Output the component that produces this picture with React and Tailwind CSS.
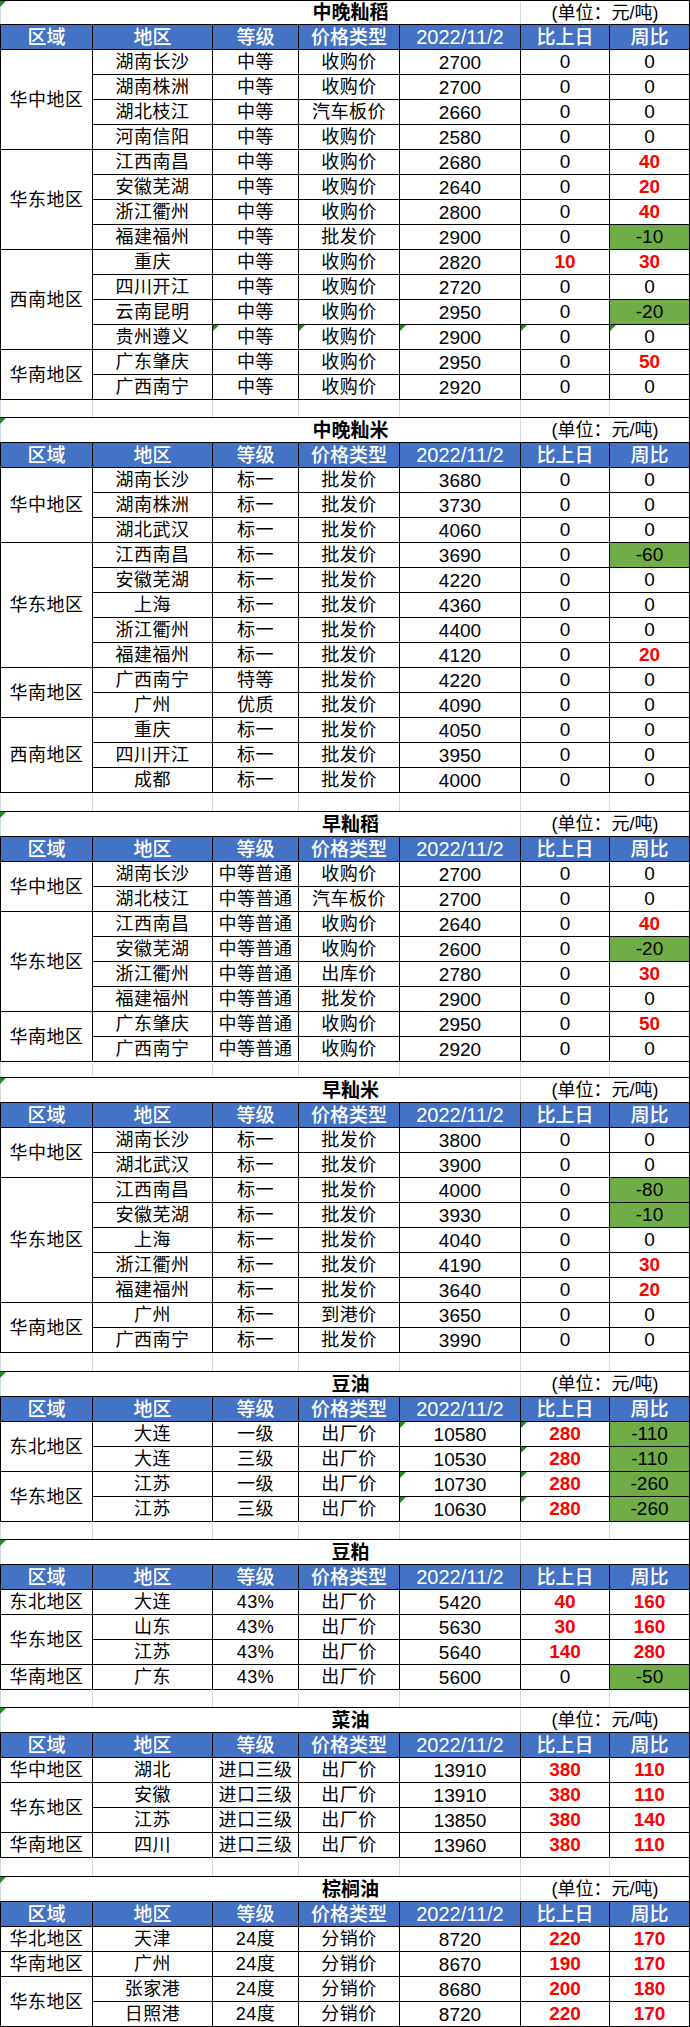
import React from 'react';

const W = ['w-[120px]', 'w-[86px]', 'w-[101px]', 'w-[121px]', 'w-[89px]', 'w-[80px]'];
const HEAD = ['地区', '等级', '价格类型', '2022/11/2', '比上日', '周比'];
const GRID = 'border-[#d0d7e5]';

// row: [地区, 等级, 价格类型, 价格, 比上日, 周比, 小三角所在列]
const tables = [
  {
    title: '中晚籼稻',
    unit: true,
    blank: 'h-[18px]',
    groups: [
      {
        region: '华中地区',
        rows: [
          ['湖南长沙', '中等', '收购价', 2700, 0, 0],
          ['湖南株洲', '中等', '收购价', 2700, 0, 0],
          ['湖北枝江', '中等', '汽车板价', 2660, 0, 0],
          ['河南信阳', '中等', '收购价', 2580, 0, 0],
        ],
      },
      {
        region: '华东地区',
        rows: [
          ['江西南昌', '中等', '收购价', 2680, 0, 40],
          ['安徽芜湖', '中等', '收购价', 2640, 0, 20],
          ['浙江衢州', '中等', '收购价', 2800, 0, 40],
          ['福建福州', '中等', '批发价', 2900, 0, -10],
        ],
      },
      {
        region: '西南地区',
        rows: [
          ['重庆', '中等', '收购价', 2820, 10, 30],
          ['四川开江', '中等', '收购价', 2720, 0, 0],
          ['云南昆明', '中等', '收购价', 2950, 0, -20],
          ['贵州遵义', '中等', '收购价', 2900, 0, 0, [1, 2, 3, 4, 5]],
        ],
      },
      {
        region: '华南地区',
        rows: [
          ['广东肇庆', '中等', '收购价', 2950, 0, 50],
          ['广西南宁', '中等', '收购价', 2920, 0, 0],
        ],
      },
    ],
  },
  {
    title: '中晚籼米',
    unit: true,
    blank: 'h-[19px]',
    groups: [
      {
        region: '华中地区',
        rows: [
          ['湖南长沙', '标一', '批发价', 3680, 0, 0],
          ['湖南株洲', '标一', '批发价', 3730, 0, 0],
          ['湖北武汉', '标一', '批发价', 4060, 0, 0],
        ],
      },
      {
        region: '华东地区',
        rows: [
          ['江西南昌', '标一', '批发价', 3690, 0, -60],
          ['安徽芜湖', '标一', '批发价', 4220, 0, 0],
          ['上海', '标一', '批发价', 4360, 0, 0],
          ['浙江衢州', '标一', '批发价', 4400, 0, 0],
          ['福建福州', '标一', '批发价', 4120, 0, 20],
        ],
      },
      {
        region: '华南地区',
        rows: [
          ['广西南宁', '特等', '批发价', 4220, 0, 0],
          ['广州', '优质', '批发价', 4090, 0, 0],
        ],
      },
      {
        region: '西南地区',
        rows: [
          ['重庆', '标一', '批发价', 4050, 0, 0],
          ['四川开江', '标一', '批发价', 3950, 0, 0],
          ['成都', '标一', '批发价', 4000, 0, 0],
        ],
      },
    ],
  },
  {
    title: '早籼稻',
    unit: true,
    blank: 'h-[16px]',
    groups: [
      {
        region: '华中地区',
        rows: [
          ['湖南长沙', '中等普通', '收购价', 2700, 0, 0],
          ['湖北枝江', '中等普通', '汽车板价', 2700, 0, 0],
        ],
      },
      {
        region: '华东地区',
        rows: [
          ['江西南昌', '中等普通', '收购价', 2640, 0, 40],
          ['安徽芜湖', '中等普通', '收购价', 2600, 0, -20],
          ['浙江衢州', '中等普通', '出库价', 2780, 0, 30],
          ['福建福州', '中等普通', '批发价', 2900, 0, 0],
        ],
      },
      {
        region: '华南地区',
        rows: [
          ['广东肇庆', '中等普通', '收购价', 2950, 0, 50],
          ['广西南宁', '中等普通', '收购价', 2920, 0, 0],
        ],
      },
    ],
  },
  {
    title: '早籼米',
    unit: true,
    blank: 'h-[19px]',
    groups: [
      {
        region: '华中地区',
        rows: [
          ['湖南长沙', '标一', '批发价', 3800, 0, 0],
          ['湖北武汉', '标一', '批发价', 3900, 0, 0],
        ],
      },
      {
        region: '华东地区',
        rows: [
          ['江西南昌', '标一', '批发价', 4000, 0, -80],
          ['安徽芜湖', '标一', '批发价', 3930, 0, -10],
          ['上海', '标一', '批发价', 4040, 0, 0],
          ['浙江衢州', '标一', '批发价', 4190, 0, 30],
          ['福建福州', '标一', '批发价', 3640, 0, 20],
        ],
      },
      {
        region: '华南地区',
        rows: [
          ['广州', '标一', '到港价', 3650, 0, 0],
          ['广西南宁', '标一', '批发价', 3990, 0, 0],
        ],
      },
    ],
  },
  {
    title: '豆油',
    unit: true,
    blank: 'h-[18px]',
    groups: [
      {
        region: '东北地区',
        rows: [
          ['大连', '一级', '出厂价', 10580, 280, -110, [3, 4]],
          ['大连', '三级', '出厂价', 10530, 280, -110, [4]],
        ],
      },
      {
        region: '华东地区',
        rows: [
          ['江苏', '一级', '出厂价', 10730, 280, -260, [3, 4]],
          ['江苏', '三级', '出厂价', 10630, 280, -260, [3, 4]],
        ],
      },
    ],
  },
  {
    title: '豆粕',
    unit: false,
    blank: 'h-[18px]',
    groups: [
      { region: '东北地区', rows: [['大连', '43%', '出厂价', 5420, 40, 160]] },
      {
        region: '华东地区',
        rows: [
          ['山东', '43%', '出厂价', 5630, 30, 160],
          ['江苏', '43%', '出厂价', 5640, 140, 280],
        ],
      },
      { region: '华南地区', rows: [['广东', '43%', '出厂价', 5600, 0, -50]] },
    ],
  },
  {
    title: '菜油',
    unit: true,
    blank: 'h-[19px]',
    groups: [
      { region: '华中地区', rows: [['湖北', '进口三级', '出厂价', 13910, 380, 110]] },
      {
        region: '华东地区',
        rows: [
          ['安徽', '进口三级', '出厂价', 13910, 380, 110],
          ['江苏', '进口三级', '出厂价', 13850, 380, 140],
        ],
      },
      { region: '华南地区', rows: [['四川', '进口三级', '出厂价', 13960, 380, 110]] },
    ],
  },
  {
    title: '棕榈油',
    unit: true,
    blank: null,
    groups: [
      { region: '华北地区', rows: [['天津', '24度', '分销价', 8720, 220, 170]] },
      { region: '华南地区', rows: [['广州', '24度', '分销价', 8670, 190, 170]] },
      {
        region: '华东地区',
        rows: [
          ['张家港', '24度', '分销价', 8680, 200, 180],
          ['日照港', '24度', '分销价', 8720, 220, 170],
        ],
      },
    ],
  },
];

const Tri = () => (
  <span className="absolute left-0 top-0 h-0 w-0 border-t-[6px] border-r-[6px] border-t-[#1e8c1e] border-r-transparent" />
);

const isNum = (v) => typeof v === 'number';

const Cell = ({ w, tri, className = '', children }) => (
  <div
    className={`relative ${w} h-full shrink-0 flex items-center justify-center border-r border-black ${className}`}
  >
    {tri && <Tri />}
    {children}
  </div>
);

const Change = ({ v }) => {
  if (v > 0) return <span className="text-[19px] font-bold text-[#ff0000]">{v}</span>;
  return <span className="text-[19px]">{v}</span>;
};

const Table = ({ t, first }) => (
  <div>
    {/* 标题行 */}
    <div
      className={`relative flex h-[25px] border-b border-r border-black ${first ? 'border-t' : ''}`}
    >
      <Tri />
      <div className={`w-[521px] h-full flex items-center justify-center pl-[180px] border-l border-r ${GRID}`}>
        <span className="text-[19px] font-bold leading-none">{t.title}</span>
      </div>
      <div className="flex-1 h-full flex items-center justify-center">
        {t.unit && <span className="text-[18px] leading-none">(单位：元/吨)</span>}
      </div>
    </div>

    {/* 表头 */}
    <div className="flex h-[25px] border-b border-black bg-[#4472c4] text-white">
      <Cell w="w-[93px]" className="border-l">
        <span className="text-[19px] font-medium leading-none">区域</span>
      </Cell>
      {HEAD.map((h, i) => (
        <Cell key={h} w={W[i]}>
          <span className={`leading-none font-medium ${i === 3 ? 'text-[20px]' : 'text-[19px]'}`}>{h}</span>
        </Cell>
      ))}
    </div>

    {t.groups.map((g, gi) => (
      <div key={gi} className="flex">
        <div className="w-[93px] shrink-0 flex items-center justify-center border-l border-r border-b border-black">
          <span className="text-[18px] tracking-[0.5px] leading-none">{g.region}</span>
        </div>
        <div className="flex-1">
          {g.rows.map((r, ri) => {
            const tri = r[6] || [];
            return (
              <div key={ri} className="flex h-[25px] border-b border-black">
                {r.slice(0, 6).map((v, ci) => (
                  <Cell
                    key={ci}
                    w={W[ci]}
                    tri={tri.includes(ci)}
                    className={ci >= 4 && v < 0 ? 'bg-[#70ad47]' : ''}
                  >
                    {ci >= 4 ? (
                      <Change v={v} />
                    ) : (
                      <span className={`leading-none ${isNum(v) ? 'text-[19px]' : 'text-[18px] tracking-[0.5px]'}`}>
                        {v}
                      </span>
                    )}
                  </Cell>
                ))}
              </div>
            );
          })}
        </div>
      </div>
    ))}

    {t.blank && (
      <div className={`flex ${t.blank} border-b border-black`}>
        <div className={`w-[93px] h-full border-l border-r ${GRID}`} />
        {W.map((w, i) => (
          <div key={i} className={`${w} h-full border-r ${i === 5 ? 'border-black' : GRID}`} />
        ))}
      </div>
    )}
  </div>
);

export default function App() {
  return (
    <div className="w-[690px] bg-white text-black font-['Liberation_Sans','Noto_Sans_CJK_SC',sans-serif]">
      {tables.map((t, i) => (
        <Table key={t.title} t={t} first={i === 0} />
      ))}
    </div>
  );
}
